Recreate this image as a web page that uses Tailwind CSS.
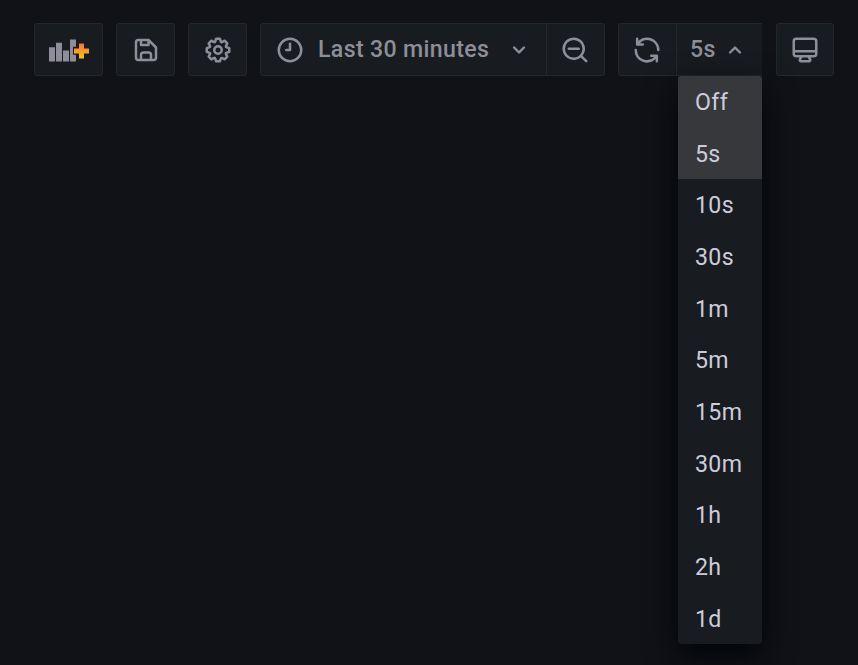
<!DOCTYPE html>
<html lang="en">
<head>
<meta charset="utf-8">
<title>Dashboard toolbar</title>
<script src="https://cdn.jsdelivr.net/npm/@tailwindcss/browser@4"></script>
</head>
<body class="h-[665px] w-[858px] overflow-hidden bg-[#111217] font-[Roboto,sans-serif] text-[23.14px] tracking-[0.34px] text-[#8e8e9a]">
<header class="flex gap-[13px] pt-[23px] pl-[34px]">
  <button class="flex h-[53px] w-[69px] items-center justify-center rounded-[3px] border border-[#25272c] bg-[#181b1f]" aria-label="Add panel">
    <svg class="h-[24px] w-[41px]" viewBox="0 0 41 24">
      <defs><linearGradient id="plus" x1="0" y1="0" x2="0" y2="1"><stop offset="0" stop-color="#f2734a"/><stop offset="1" stop-color="#fbc60e"/></linearGradient></defs>
      <path fill="#8e8e9a" d="M1 9.200h6v14.300H1zM8 4.800h6v18.700H8zM15 12.500h6v11h-6zM22 1.500h6v22h-6z"/>
      <path fill="#181b1f" d="M29.500 4H37.500V9H41V17H37.500V21.500H29.500V16.800H25V8.700H29.500z"/>
      <path fill="url(#plus)" d="M31 5.500h5v5h5v5h-5v5h-5v-5h-5v-5h5z"/>
    </svg>
  </button>
  <button class="flex h-[53px] w-[59px] items-center justify-center rounded-[3px] border border-[#25272c] bg-[#181b1f]" aria-label="Save">
    <svg class="size-[30px]" viewBox="0 0 24 24" fill="currentColor"><path d="m20.710 9.290-6-6a1 1 0 0 0-.32-.21A1.090 1.090 0 0 0 14 3H6a3 3 0 0 0-3 3v12a3 3 0 0 0 3 3h12a3 3 0 0 0 3-3v-8a1 1 0 0 0-.29-.71ZM9 5h4v2H9Zm6 14H9v-3a1 1 0 0 1 1-1h4a1 1 0 0 1 1 1Zm4-1a1 1 0 0 1-1 1h-1v-3a3 3 0 0 0-3-3h-4a3 3 0 0 0-3 3v3H6a1 1 0 0 1-1-1V6a1 1 0 0 1 1-1h1v3a1 1 0 0 0 1 1h6a1 1 0 0 0 1-1V6.410l4 4Z"/></svg>
  </button>
  <button class="flex h-[53px] w-[59px] items-center justify-center rounded-[3px] border border-[#25272c] bg-[#181b1f]" aria-label="Settings">
    <svg class="size-[30px]" viewBox="0 0 24 24" fill="currentColor"><path d="M21.320,9.550l-1.890-.63.89-1.780A1,1,0,0,0,20.130,6L18,3.870a1,1,0,0,0-1.150-.19l-1.780.89-.63-1.890A1,1,0,0,0,13.500,2h-3a1,1,0,0,0-.95.68L8.920,4.570,7.140,3.680A1,1,0,0,0,6,3.870L3.870,6a1,1,0,0,0-.19,1.150l.89,1.780-1.890.63A1,1,0,0,0,2,10.500v3a1,1,0,0,0,.68.95l1.890.63-.89,1.780A1,1,0,0,0,3.870,18L6,20.130a1,1,0,0,0,1.150.19l1.780-.89.63,1.890a1,1,0,0,0,.95.68h3a1,1,0,0,0,.95-.68l.63-1.890,1.780.89A1,1,0,0,0,18,20.130L20.130,18a1,1,0,0,0,.19-1.150l-.89-1.780,1.890-.63A1,1,0,0,0,22,13.500v-3A1,1,0,0,0,21.320,9.550ZM20,12.780l-1.200.4A2,2,0,0,0,17.640,16l.57,1.140-1.100,1.100L16,17.640a2,2,0,0,0-2.790,1.160l-.4,1.200H11.220l-.4-1.200A2,2,0,0,0,8,17.640l-1.140.57-1.100-1.100L6.360,16A2,2,0,0,0,5.200,13.180L4,12.780V11.220l1.200-.4A2,2,0,0,0,6.360,8L5.790,6.890l1.100-1.100L8,6.360A2,2,0,0,0,10.820,5.200l.4-1.200h1.560l.4,1.200A2,2,0,0,0,16,6.360l1.140-.57,1.100,1.100L17.640,8a2,2,0,0,0,1.160,2.790l1.200.4ZM12,8a4,4,0,1,0,4,4A4,4,0,0,0,12,8Zm0,6a2,2,0,1,1,2-2A2,2,0,0,1,12,14Z"/></svg>
  </button>
  <div class="flex h-[53px] w-[345px] rounded-[3px] border border-[#25272c] bg-[#181b1f]">
    <button class="flex w-[286px] items-center border-r border-[#25272c] pl-[14px] font-medium">
      <svg class="size-[30px] shrink-0" viewBox="0 0 24 24" fill="currentColor"><path d="M12,6a1,1,0,0,0-1,1v4H9a1,1,0,0,0,0,2h3a1,1,0,0,0,1-1V7A1,1,0,0,0,12,6Zm0-4A10,10,0,1,0,22,12,10,10,0,0,0,12,2Zm0,18a8,8,0,1,1,8-8A8,8,0,0,1,12,20Z"/></svg>
      <span class="ml-[13px] w-[187px] pt-px text-left whitespace-nowrap">Last 30 minutes</span>
      <svg class="size-[28px] shrink-0" viewBox="0 0 24 24" fill="currentColor"><path d="M17,9.170a1,1,0,0,0-1.410,0L12,12.710,8.460,9.170a1,1,0,0,0-1.410,0,1,1,0,0,0,0,1.420l4.240,4.240a1,1,0,0,0,1.420,0L17,10.590A1,1,0,0,0,17,9.170Z"/></svg>
    </button>
    <button class="flex flex-1 items-center justify-center pr-[2px]" aria-label="Zoom out">
      <svg class="size-[30px]" viewBox="0 0 24 24" fill="currentColor"><path d="M21.710,20.290,18,16.610A9,9,0,1,0,16.610,18l3.680,3.680a1,1,0,0,0,1.420,0A1,1,0,0,0,21.710,20.290ZM11,18a7,7,0,1,1,7-7A7,7,0,0,1,11,18Zm4-8H7a1,1,0,0,0,0,2h8a1,1,0,0,0,0-2Z"/></svg>
    </button>
  </div>
  <div class="relative flex h-[53px] w-[144px] rounded-l-[3px] border border-r-0 border-[#25272c] bg-[#181b1f]">
    <button class="flex w-[58px] items-center justify-center border-r border-[#25272c] pr-[2px]" aria-label="Refresh">
      <svg class="size-[30px]" viewBox="0 0 24 24" fill="currentColor"><path d="M19.910,15.510H15.380a1,1,0,0,0,0,2h2.400A8,8,0,0,1,4,12a1,1,0,1,0-2,0,10,10,0,0,0,16.880,7.230V21a1,1,0,0,0,2,0V16.500A1,1,0,0,0,19.910,15.510ZM12,2A10,10,0,0,0,5.120,4.770V3a1,1,0,0,0-2,0V7.500a1,1,0,0,0,1,1h4.500a1,1,0,0,0,0-2H6.220A8,8,0,0,1,20,12a1,1,0,0,0,2,0A10,10,0,0,0,12,2Z"/></svg>
    </button>
    <button class="flex flex-1 items-center pl-[13px] font-medium">
      <span class="w-[31px] pt-px text-left">5s</span>
      <svg class="size-[28px] shrink-0" viewBox="0 0 24 24" fill="currentColor"><path d="M17,13.410,12.710,9.170a1,1,0,0,0-1.420,0L7.050,13.410a1,1,0,0,0,0,1.420,1,1,0,0,0,1.410,0L12,11.290l3.540,3.540a1,1,0,0,0,.7.290,1,1,0,0,0,.71-.29A1,1,0,0,0,17,13.410Z"/></svg>
    </button>
    <ul class="absolute top-[52px] left-[59px] grid h-[568px] w-[84px] grid-rows-11 overflow-hidden rounded-[3px] bg-[#181b1f] text-[#ccccdc] shadow-[0_13px_33px_rgb(1,4,9)]">
      <li class="flex items-center bg-[#37383c] pt-[3.4px] pl-[17px]">Off</li>
      <li class="flex items-center bg-[#37383c] pt-[3.4px] pl-[17px]">5s</li>
      <li class="flex items-center pt-[3.4px] pl-[17px]">10s</li>
      <li class="flex items-center pt-[3.4px] pl-[17px]">30s</li>
      <li class="flex items-center pt-[3.4px] pl-[17px]">1m</li>
      <li class="flex items-center pt-[3.4px] pl-[17px]">5m</li>
      <li class="flex items-center pt-[3.4px] pl-[17px]">15m</li>
      <li class="flex items-center pt-[3.4px] pl-[17px]">30m</li>
      <li class="flex items-center pt-[3.4px] pl-[17px]">1h</li>
      <li class="flex items-center pt-[3.4px] pl-[17px]">2h</li>
      <li class="flex items-center pt-[3.4px] pl-[17px]">1d</li>
    </ul>
  </div>
  <button class="ml-px flex h-[53px] w-[58px] items-center justify-center rounded-[3px] border border-[#25272c] bg-[#181b1f]" aria-label="Cycle view mode">
    <svg class="size-[30px]" viewBox="0 0 24 24" fill="currentColor"><path d="M19,2H5A3,3,0,0,0,2,5V15a3,3,0,0,0,3,3H7.640l-.58,1a2,2,0,0,0,0,2,2,2,0,0,0,1.750,1h6.460A2,2,0,0,0,17,21a2,2,0,0,0,0-2l-.59-1H19a3,3,0,0,0,3-3V5A3,3,0,0,0,19,2ZM8.770,20,10,18H14l1.200,2ZM20,15a1,1,0,0,1-1,1H5a1,1,0,0,1-1-1V14H20Zm0-3H4V5A1,1,0,0,1,5,4H19a1,1,0,0,1,1,1Z"/></svg>
  </button>
</header>
</body>
</html>
